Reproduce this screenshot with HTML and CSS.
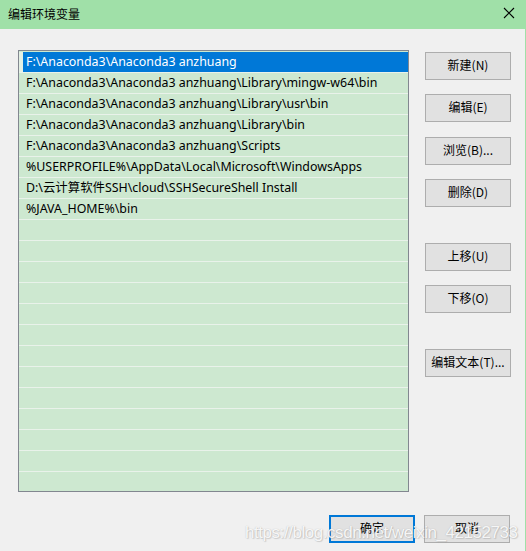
FILE: index.html
```html
<!DOCTYPE html>
<html lang="zh-CN">
<head>
<meta charset="utf-8">
<title>编辑环境变量</title>
<link rel="stylesheet" href="styles.css">
</head>
<body>
<div class="window">
  <div class="titlebar">
    <span class="title">编辑环境变量</span>
    <svg class="close" width="12" height="12" viewBox="0 0 12 12"><path d="M1 1 L11 11 M11 1 L1 11" stroke="#000" stroke-width="1.1" fill="none"/></svg>
  </div>
  <div class="content">
    <div class="main">
      <div class="list">
        <div class="row selected"><span class="sel">F:\Anaconda3\Anaconda3 anzhuang</span></div>
        <div class="row">F:\Anaconda3\Anaconda3 anzhuang\Library\mingw-w64\bin</div>
        <div class="row">F:\Anaconda3\Anaconda3 anzhuang\Library\usr\bin</div>
        <div class="row">F:\Anaconda3\Anaconda3 anzhuang\Library\bin</div>
        <div class="row">F:\Anaconda3\Anaconda3 anzhuang\Scripts</div>
        <div class="row">%USERPROFILE%\AppData\Local\Microsoft\WindowsApps</div>
        <div class="row">D:\云计算软件SSH\cloud\SSHSecureShell Install</div>
        <div class="row">%JAVA_HOME%\bin</div>
        <div class="row"></div><div class="row"></div><div class="row"></div><div class="row"></div>
        <div class="row"></div><div class="row"></div><div class="row"></div><div class="row"></div>
        <div class="row"></div><div class="row"></div><div class="row"></div><div class="row"></div>
        <div class="row"></div><div class="row"></div>
      </div>
      <div class="side">
        <button class="btn">新建(N)</button>
        <button class="btn g14">编辑(E)</button>
        <button class="btn g15">浏览(B)...</button>
        <button class="btn g14">删除(D)</button>
        <button class="btn g36">上移(U)</button>
        <button class="btn g14">下移(O)</button>
        <button class="btn g36">编辑文本(T)...</button>
      </div>
    </div>
    <div class="footer">
      <button class="btn ok">确定</button>
      <button class="btn">取消</button>
      <span class="watermark">https://blog.csdn.net/weixin_42152733</span>
    </div>
  </div>
</div>
</body>
</html>
```

FILE: styles.css
```css
html, body {
  margin: 0;
  padding: 0;
  background: #f0f0f0;
}
body {
  width: 526px;
  height: 551px;
  overflow: hidden;
  font-family: "Noto Sans", "Noto Sans CJK SC", sans-serif;
  font-size: 12px;
  color: #000;
}
.window {
  display: flex;
  flex-direction: column;
  width: 526px;
  height: 551px;
  box-sizing: border-box;
  border-right: 1px solid #a0e0a8;
}
.titlebar {
  height: 29px;
  background: #a0e0a8;
  display: flex;
  align-items: center;
  justify-content: space-between;
  padding: 0 10px 2px 8px;
  box-sizing: border-box;
}
.title {
  font-family: "Noto Sans CJK SC", sans-serif;
  font-size: 12px;
  color: #000;
}
.close {
  display: block;
  margin-bottom: 1px;
}
.content {
  flex: 1;
  position: relative;
  display: flex;
  flex-direction: column;
}
.main {
  display: flex;
  padding: 21px 0 0 18px;
}
.list {
  width: 391px;
  height: 442px;
  box-sizing: border-box;
  border: 1px solid #828790;
  background: #cde8d0;
  padding-top: 1px;
  overflow: hidden;
}
.row {
  height: 20px;
  line-height: 20px;
  border-bottom: 1px solid #e9f2ea;
  padding-left: 7px;
  white-space: nowrap;
  font-family: "Noto Sans", "Noto Sans CJK SC", sans-serif;
  font-size: 12.4px;
}
.row.selected {
  padding-left: 4px;
  background: #e4f0e5;
}
.sel {
  display: block;
  height: 20px;
  background: #0078d7;
  color: #fff;
  padding-left: 3px;
}
.side {
  display: flex;
  flex-direction: column;
  margin-left: 16px;
  padding-top: 2px;
}
.btn {
  width: 86px;
  height: 28px;
  box-sizing: border-box;
  border: 1px solid #adadad;
  background: #e1e1e1;
  font-family: "Noto Sans CJK SC", sans-serif;
  font-size: 12px;
  line-height: 1;
  color: #000;
  padding: 0 0 2px 0;
  margin: 0;
}
.g14 { margin-top: 14px; }
.g15 { margin-top: 15px; }
.g36 { margin-top: 36px; }
.footer {
  display: flex;
  justify-content: flex-end;
  gap: 9px;
  padding: 23px 15px 0 0;
  position: relative;
}
.btn.ok {
  border: 2px solid #0078d7;
}
.watermark {
  position: absolute;
  left: 245px;
  top: 31px;
  font-family: "Liberation Sans", Arial, sans-serif;
  font-size: 17px;
  letter-spacing: -0.45px;
  color: rgba(255, 255, 255, 0.9);
  text-shadow: 0 0 1px rgba(130, 130, 130, 0.5), 1px 1px 1px rgba(160, 160, 160, 0.4);
  white-space: nowrap;
  pointer-events: none;
}
```
